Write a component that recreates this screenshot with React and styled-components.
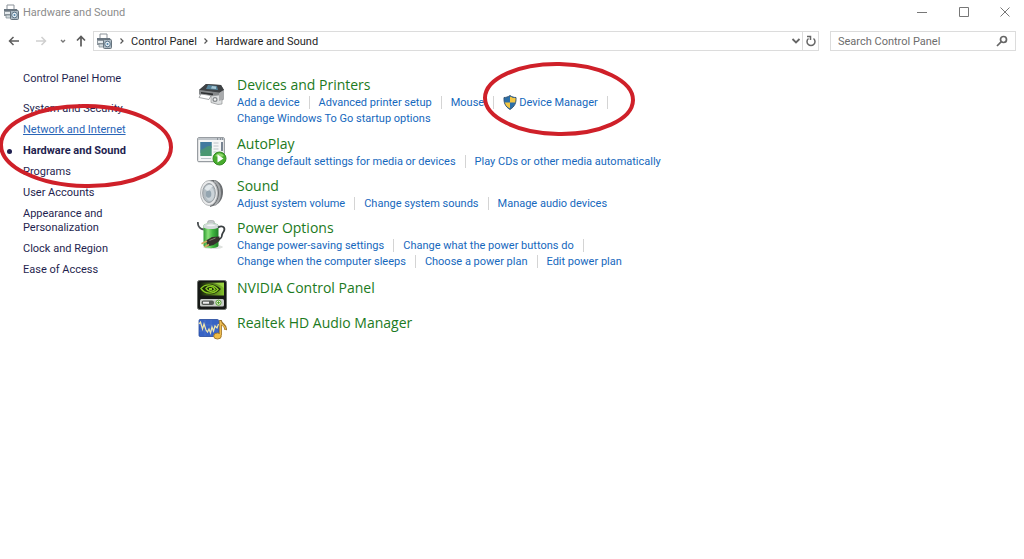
import styled, { createGlobalStyle, css } from 'styled-components'

const GlobalStyle = createGlobalStyle`
  * {
    box-sizing: border-box;
  }

  body {
    margin: 0;
    background: #fff;
    font-family: Roboto, 'Open Sans', sans-serif;
    font-size: 11px;
    color: #1e1e1e;
  }

  button {
    display: flex;
    align-items: center;
    justify-content: center;
    padding: 0;
    border: none;
    background: none;
    font: inherit;
    color: inherit;
  }
`

const Window = styled.div`
  position: relative;
  min-height: 100vh;
  overflow: hidden;
`

const TitleBar = styled.header`
  display: flex;
  align-items: center;
  height: 24px;
  padding-left: 3px;
`

const WindowTitle = styled.h1`
  flex: 1;
  margin: 0 0 0 4px;
  font-size: 11px;
  font-weight: 400;
  color: #8c8c8c;
`

const WindowButton = styled.button`
  width: 42px;
  height: 24px;
  flex: none;

  &:last-child {
    width: 39px;
  }
`

const NavBar = styled.div`
  display: flex;
  align-items: center;
  padding: 7px 8px 0 4px;
`

const NavButton = styled.button`
  width: ${({ $width }) => $width}px;
  height: 20px;
  flex: none;
`

const AddressBar = styled.div`
  flex: 1;
  display: flex;
  align-items: center;
  height: 20px;
  margin-right: 11px;
  padding-left: 2px;
  border: 1px solid #dcdcdc;
`

const Crumb = styled.button`
  white-space: nowrap;
`

const CrumbArrow = styled.button`
  width: 19px;
  height: 18px;
  flex: none;
`

const RefreshButton = styled.button`
  width: 16px;
  height: 18px;
  border-left: 1px solid #dcdcdc;
`

const Spacer = styled.div`
  flex: 1;
`

const SearchBox = styled.label`
  display: flex;
  align-items: center;
  width: 186px;
  height: 20px;
  padding: 0 7px;
  border: 1px solid #dcdcdc;
`

const SearchInput = styled.input`
  flex: 1;
  min-width: 0;
  padding: 0;
  border: none;
  outline: none;
  font: inherit;

  &::placeholder {
    color: #6d6d6d;
    opacity: 1;
  }
`

const Body = styled.div`
  display: flex;
  align-items: flex-start;
`

const Sidebar = styled.nav`
  width: 197px;
  flex: none;
  padding: 21px 60px 0 23px;
  line-height: 14px;
`

const SideLink = styled.a`
  display: block;
  color: #1f1f4f;
  text-decoration: none;

  ${({ $hot }) => $hot && css`
    color: #2a66b8;
    text-decoration: underline;
  `}
`

const SideList = styled.ul`
  margin: 16px 0 0;
  padding: 0;
  list-style: none;
`

const SideItem = styled.li`
  position: relative;
  margin-bottom: 7px;

  ${({ $current }) => $current && css`
    font-weight: 700;

    &::before {
      content: '';
      position: absolute;
      left: -16px;
      top: 5px;
      width: 5px;
      height: 5px;
      border-radius: 50%;
      background: #1f1f4f;
    }
  `}
`

const Main = styled.main`
  flex: 1;
  padding: 25px 16px 0 0;
`

const Category = styled.section`
  display: flex;
  min-height: 27px;
  margin-bottom: 8px;
  padding-top: ${({ $plain }) => ($plain ? 1 : 0)}px;
`

const IconBox = styled.div`
  width: 30px;
  height: 30px;
  flex: none;
  margin: 1px 10px -5px 0;
`

const CategoryTitle = styled.h2`
  margin: 0;
  font-family: 'Open Sans', sans-serif;
  font-size: 14px;
  line-height: 18px;
  font-weight: 400;
`

const TitleLink = styled.a`
  color: #1c7a22;
  text-decoration: none;
`

const TaskRows = styled.div`
  padding-bottom: ${({ $wrapped }) => ($wrapped ? 1 : 0)}px;
`

const TaskRow = styled.div`
  display: flex;
  align-items: center;
  height: 16px;
  white-space: nowrap;
`

const TaskLink = styled.a`
  display: flex;
  align-items: center;
  gap: 2px;
  color: #1668bd;
  text-decoration: none;
`

const Divider = styled.span`
  width: 1px;
  height: 13px;
  margin: 0 9px;
  background: #d4d4d4;
`

const Marker = styled.svg`
  position: absolute;
  left: ${({ $x }) => $x}px;
  top: ${({ $y }) => $y}px;
  fill: none;
  stroke: #cf2029;
  stroke-width: 4;
  pointer-events: none;
`

const HardwareIcon = () => (
  <svg width="16" height="16" viewBox="0 0 16 16" aria-hidden="true">
    <path d="M4 5V1h7v4" fill="#fff" stroke="#8b9299" />
    <path d="M1 5h13l1 2v5H1z" fill="#8f989f" />
    <path d="M1 5h13v2H1z" fill="#697580" />
    <path d="M2 8h5v2H2z" fill="#e6ebee" />
    <path d="M3 11h5v3H3z" fill="#d2dade" stroke="#7a858d" strokeWidth=".7" />
    <rect x="7.500" y="6.500" width="8" height="9" rx="1" fill="#acb9c2" stroke="#66737d" />
    <circle cx="11.500" cy="11" r="2.800" fill="#e5eef4" stroke="#597286" />
    <circle cx="11.500" cy="11" r="1" fill="#4e82a8" />
  </svg>
)

const PrinterIcon = () => (
  <svg width="30" height="30" viewBox="0 0 30 30" aria-hidden="true">
    <path d="M9 7 24 8l3 5v9l-4 3-5-5-16-3v-4z" fill="#6c6e70" />
    <path d="M9 7 24 8l3 5-5 3L2 13z" fill="#3f4245" />
    <path d="m11 8 9 1 1 4-12-1z" fill="#55839a" />
    <path d="m15 9 4 .500v2.500l-5-.500z" fill="#a5c6d4" />
    <path d="m2 13 20 2.500v8l-2-3-18-3z" fill="#85888a" />
    <path d="m4 15 12 1.500v2L4 17z" fill="#2f3133" />
    <path d="m4 17 10 1.500-2 4-10-2z" fill="#fff" stroke="#8f9294" strokeWidth=".8" />
    <path d="m14 19 8-1 3 2v7l-4 .500-7-2z" fill="#dcdedf" stroke="#8f9294" strokeWidth=".7" />
    <circle cx="18" cy="22.500" r="2.500" fill="#85898c" />
    <circle cx="18" cy="22.500" r="1.200" fill="#f2f2f2" />
    <path d="m22 16 5-3v9l-5 2z" fill="#a9abad" />
  </svg>
)

const AutoPlayIcon = () => (
  <svg width="30" height="30" viewBox="0 0 30 30" aria-hidden="true">
    <rect x=".700" y="1.700" width="26.600" height="24" rx="1" fill="#f5f6f6" stroke="#81878d" />
    <path d="M1 2h26v2H1z" fill="#c0c5ca" />
    <path d="M20 3h1m2 0h1m1 0h1" stroke="#59616a" />
    <rect x="3.500" y="6" width="11" height="14" fill="#3f8b81" />
    <path d="M3.500 6h11v6l-11 5z" fill="#417a9f" />
    <path d="M3.500 14c4-1 7-5 11-4v10h-11z" fill="#4f9d69" opacity=".7" />
    <path d="M16.500 7h5m-5 3h5m-5 3h5m-5 3h3M4 22.500h10" stroke="#bcc4c8" />
    <path d="M25 6v9" stroke="#4e5e71" strokeWidth="1.500" />
    <circle cx="22.500" cy="22.500" r="6.500" fill="#47ab2d" stroke="#328a20" />
    <path d="M18 20a5 5 0 0 1 9 0q-4 2-9 0" fill="#8fd66c" />
    <path d="m20.500 18.500 6 4-6 4z" fill="#fff" />
  </svg>
)

const SpeakerIcon = () => (
  <svg width="30" height="30" viewBox="0 0 30 30" aria-hidden="true">
    <path d="M12 2h6c5 2 8 6 8 12s-3 11-7 13l-6 2z" fill="#6b6e71" />
    <path d="M17 3c4 2 6 6 6 12s-2 9-5 12" fill="none" stroke="#a5a8aa" strokeWidth="2" />
    <ellipse cx="12" cy="15" rx="8.500" ry="12.500" fill="#e9eaeb" stroke="#b5b8ba" />
    <ellipse cx="12" cy="15" rx="6.300" ry="9.500" fill="#b3bcc2" stroke="#979da1" />
    <ellipse cx="13" cy="16" rx="4.300" ry="7" fill="#ccd4d9" />
    <ellipse cx="11.500" cy="16" rx="2.800" ry="3.800" fill="#94a5b0" />
    <path d="M7.500 11c2-5 6-5 8.500-3l-5 5z" fill="#e2e8eb" />
  </svg>
)

const PowerIcon = () => (
  <svg width="30" height="30" viewBox="0 0 30 30" aria-hidden="true">
    <defs>
      <linearGradient id="cell" x1="0" x2="1">
        <stop offset="0" stopColor="#2b9a2e" />
        <stop offset=".3" stopColor="#8be07a" />
        <stop offset=".6" stopColor="#43b942" />
        <stop offset="1" stopColor="#1f7f26" />
      </linearGradient>
    </defs>
    <ellipse cx="16" cy="27" rx="10" ry="2" fill="#dfe2df" />
    <path d="M.800 2c0 4 2 7 6 7.500" fill="none" stroke="#4c5153" strokeWidth="1.800" />
    <rect x="10.500" y=".500" width="7" height="4" rx="2" fill="#c4c9ca" stroke="#9da3a4" strokeWidth=".6" />
    <path d="M6.500 6c0-4 15-4 15 0v19.500c0 3.500-15 3.500-15 0z" fill="url(#cell)" />
    <path d="M6.500 6c0-4 15-4 15 0v1.500c-4 2-11 2-15 0z" fill="#d3d9da" />
    <path d="M9 5.500c2-1.500 8-1.500 10 0-3 1-7 1-10 0" fill="#f3f5f5" />
    <path d="M21 7.500c4-2.500 7-.500 6.300 2.500-.500 2-2 3-2.300 5-.300 3-1 4-4 4.500" fill="none" stroke="#3a3f41" strokeWidth="1.800" />
    <path d="m9 20.500 6-3.500 7.500-.500v4.500l-6 4-6 1.500z" fill="#35312c" />
    <path d="M10 21 4.500 23.800M12 24.500 7.500 27" stroke="#d0a95e" strokeWidth="1.600" />
    <path d="m12.500 20.500 6-2.500" stroke="#857f71" />
  </svg>
)

const NvidiaIcon = () => (
  <svg width="30" height="30" viewBox="0 0 30 30" aria-hidden="true">
    <defs>
      <linearGradient id="nvGreen" x1="0" x2="1">
        <stop offset="0" stopColor="#16200c" />
        <stop offset="1" stopColor="#86c42c" />
      </linearGradient>
    </defs>
    <rect x=".500" y=".500" width="29" height="29" rx="2" fill="#161816" stroke="#6b6f6b" />
    <path d="M3 2.500h24v13H3z" fill="url(#nvGreen)" />
    <path d="M13 3h14v5c-3-3-8-5-14-5" fill="#a6dc4b" opacity=".7" />
    <path d="M3 9c4-6 13-7 21 0-6 7-16 7-21 0z" fill="#1b2a0a" />
    <path d="M4 8.500c4-5 12-5 17 1-5 5-13 5-17-1z" fill="none" stroke="#8acb25" strokeWidth="1.400" />
    <path d="M9 8.500c2-3 7-3 9 1-3 3-7 2-9-1z" fill="none" stroke="#8acb25" strokeWidth="1.400" />
    <path d="M12 8h3v2h-3z" fill="#8acb25" />
    <rect x="3" y="19" width="24" height="7.500" rx="1.500" fill="#c9cdc9" />
    <rect x="4.500" y="20.500" width="12.500" height="4.500" rx="2" fill="#535853" />
    <path d="M6 21.700h6v2H6z" fill="#f0f0f0" />
    <circle cx="21.500" cy="22.700" r="2.600" fill="#e6eee1" stroke="#56a12f" />
    <path d="M21.500 21.200v3m-1.500-1.500h3" stroke="#56a12f" />
  </svg>
)

const RealtekIcon = () => (
  <svg width="30" height="30" viewBox="0 0 30 30" aria-hidden="true">
    <rect x="2" y="4.500" width="19.500" height="17" rx="1" fill="#3763c4" stroke="#274a9c" strokeWidth=".8" />
    <path d="M2 10h19M2 16h19M8 5v16m6-16v16" stroke="#5479cf" strokeWidth=".6" />
    <path d="m2 9 1.500-2 2 7L7 9l2 6 1.500 2 1.500-3 1.500 4 1.500-6 1.500 4 1.500-5 2 2 1.500-4" fill="none" stroke="#efe6ac" strokeWidth="1.200" />
    <path d="M23.500 5v15m0-14c1 4 6 4 5 9" fill="none" stroke="#9a712a" strokeWidth="2.800" />
    <ellipse cx="20.500" cy="21" rx="3.800" ry="3" fill="#f0bd45" stroke="#a67b2c" />
    <path d="M23.500 6v14m0-13c1 4 6 4 5 7.500" fill="none" stroke="#efbe52" strokeWidth="1.300" />
  </svg>
)

const ShieldIcon = () => (
  <svg width="14" height="15" viewBox="0 0 14 15" aria-hidden="true">
    <path d="M7 .500c2 1.500 4 2 6 2 .300 5-1 9-6 12-5-3-6.300-7-6-12 2 0 4-.500 6-2" fill="#2c6fa8" />
    <path d="M7 1.500C9 2.500 11 3 13 3c0 2 0 3-.500 4.500H7z" fill="#f3c642" />
    <path d="M1.500 7.500H7v6C4 12 2 10 1.500 7.500" fill="#f3c642" />
    <path d="M7 .500c2 1.500 4 2 6 2 .300 5-1 9-6 12-5-3-6.300-7-6-12 2 0 4-.500 6-2" fill="none" stroke="#31506d" strokeWidth=".9" />
  </svg>
)

const LineIcon = ({ d, color = '#5c5c5c', width = 1.5 }) => (
  <svg width="12" height="12" viewBox="0 0 12 12" fill="none" stroke={color} strokeWidth={width} aria-hidden="true">
    <path d={d} />
  </svg>
)

const ChevronIcon = () => (
  <svg width="6" height="8" viewBox="0 0 6 8" fill="none" stroke="#555" strokeWidth="1.200" aria-hidden="true">
    <path d="m1.500 1.500 2.500 2.500-2.500 2.500" />
  </svg>
)

const sideLinks = [
  'System and Security',
  'Network and Internet',
  'Hardware and Sound',
  'Programs',
  'User Accounts',
  'Appearance and Personalization',
  'Clock and Region',
  'Ease of Access',
]

// Each row of tasks is one line; `open` rows end with a trailing divider.
const categories = [
  {
    title: 'Devices and Printers',
    Icon: PrinterIcon,
    rows: [
      { open: true, tasks: ['Add a device', 'Advanced printer setup', 'Mouse', 'Device Manager'] },
      { tasks: ['Change Windows To Go startup options'] },
    ],
  },
  {
    title: 'AutoPlay',
    Icon: AutoPlayIcon,
    rows: [{ tasks: ['Change default settings for media or devices', 'Play CDs or other media automatically'] }],
  },
  {
    title: 'Sound',
    Icon: SpeakerIcon,
    rows: [{ tasks: ['Adjust system volume', 'Change system sounds', 'Manage audio devices'] }],
  },
  {
    title: 'Power Options',
    Icon: PowerIcon,
    rows: [
      { open: true, tasks: ['Change power-saving settings', 'Change what the power buttons do'] },
      { tasks: ['Change when the computer sleeps', 'Choose a power plan', 'Edit power plan'] },
    ],
  },
  { title: 'NVIDIA Control Panel', Icon: NvidiaIcon, rows: [] },
  { title: 'Realtek HD Audio Manager', Icon: RealtekIcon, rows: [] },
]

const Task = ({ name, divided }) => (
  <>
    <TaskLink href="#">
      {name === 'Device Manager' && <ShieldIcon />}
      {name}
    </TaskLink>
    {divided && <Divider />}
  </>
)

const App = () => {
  return (
    <Window>
      <GlobalStyle />
      <TitleBar>
        <HardwareIcon />
        <WindowTitle>Hardware and Sound</WindowTitle>
        <WindowButton aria-label="Minimize">
          <LineIcon d="M1 6.500h10" color="#777" width={1} />
        </WindowButton>
        <WindowButton aria-label="Maximize">
          <LineIcon d="M1.500 1.500h9v9h-9z" color="#777" width={1} />
        </WindowButton>
        <WindowButton aria-label="Close">
          <LineIcon d="m1.500 1.500 9 9m0-9-9 9" color="#777" width={1} />
        </WindowButton>
      </TitleBar>

      <NavBar>
        <NavButton $width={20} aria-label="Back">
          <LineIcon d="M11 6H1.500M5.500 2l-4 4 4 4" />
        </NavButton>
        <NavButton $width={34} aria-label="Forward">
          <LineIcon d="M1 6h9.500m-4-4 4 4-4 4" color="#cfcfcf" />
        </NavButton>
        <NavButton $width={10} aria-label="Recent locations">
          <svg width="8" height="6" viewBox="0 0 8 6" fill="none" stroke="#777" strokeWidth="1.400" aria-hidden="true">
            <path d="m2 2 2 2 2-2" />
          </svg>
        </NavButton>
        <NavButton $width={25} aria-label="Up">
          <LineIcon d="M6 11.500V1.500M2 5.500l4-4 4 4" width={1.7} />
        </NavButton>
        <AddressBar>
          <HardwareIcon />
          <CrumbArrow aria-label="Show locations">
            <ChevronIcon />
          </CrumbArrow>
          <Crumb>Control Panel</Crumb>
          <CrumbArrow aria-label="Show Control Panel items">
            <ChevronIcon />
          </CrumbArrow>
          <Crumb>Hardware and Sound</Crumb>
          <Spacer />
          <NavButton $width={12} aria-label="Previous locations">
            <svg width="10" height="8" viewBox="0 0 10 8" fill="none" stroke="#666" strokeWidth="1.800" aria-hidden="true">
              <path d="m1.500 2 3.500 3.500 3.500-3.500" />
            </svg>
          </NavButton>
          <RefreshButton aria-label="Refresh">
            <svg width="12" height="12" viewBox="0 0 12 12" fill="none" stroke="#666" strokeWidth="1.500" aria-hidden="true">
              <path d="M8.500 3.500A4 4 0 1 1 3.500 3.500M2 1.500h3.500V5" />
            </svg>
          </RefreshButton>
        </AddressBar>
        <SearchBox>
          <SearchInput type="text" aria-label="Search Control Panel" placeholder="Search Control Panel" />
          <svg width="12" height="12" viewBox="0 0 12 12" fill="none" stroke="#666" strokeWidth="1.700" aria-hidden="true">
            <circle cx="7.500" cy="4.500" r="3" />
            <path d="M5.300 6.700 1 11" />
          </svg>
        </SearchBox>
      </NavBar>

      <Body>
        <Sidebar aria-label="Control Panel categories">
          <SideLink href="#">Control Panel Home</SideLink>
          <SideList>
            {sideLinks.map((name) => (
              <SideItem key={name} $current={name === 'Hardware and Sound'}>
                <SideLink href="#" $hot={name === 'Network and Internet'}>
                  {name}
                </SideLink>
              </SideItem>
            ))}
          </SideList>
        </Sidebar>

        <Main>
          {categories.map(({ title, Icon, rows }) => (
            <Category key={title} $plain={rows.length === 0}>
              <IconBox>
                <Icon />
              </IconBox>
              <div>
                <CategoryTitle>
                  <TitleLink href="#">{title}</TitleLink>
                </CategoryTitle>
                <TaskRows $wrapped={rows.length > 1}>
                  {rows.map(({ tasks, open }) => (
                    <TaskRow key={tasks[0]}>
                      {tasks.map((name, i) => (
                        <Task key={name} name={name} divided={open || i < tasks.length - 1} />
                      ))}
                    </TaskRow>
                  ))}
                </TaskRows>
              </div>
            </Category>
          ))}
        </Main>
      </Body>

      <Marker $x={-2} $y={102} width="178" height="88" viewBox="0 0 178 88" aria-hidden="true">
        <ellipse cx="88" cy="44" rx="85" ry="40" transform="rotate(1 88 44)" />
      </Marker>
      <Marker $x={480} $y={60} width="158" height="80" viewBox="0 0 158 80" aria-hidden="true">
        <ellipse cx="79" cy="39" rx="74" ry="35" transform="rotate(1 79 39)" />
      </Marker>
    </Window>
  )
}

export default App
